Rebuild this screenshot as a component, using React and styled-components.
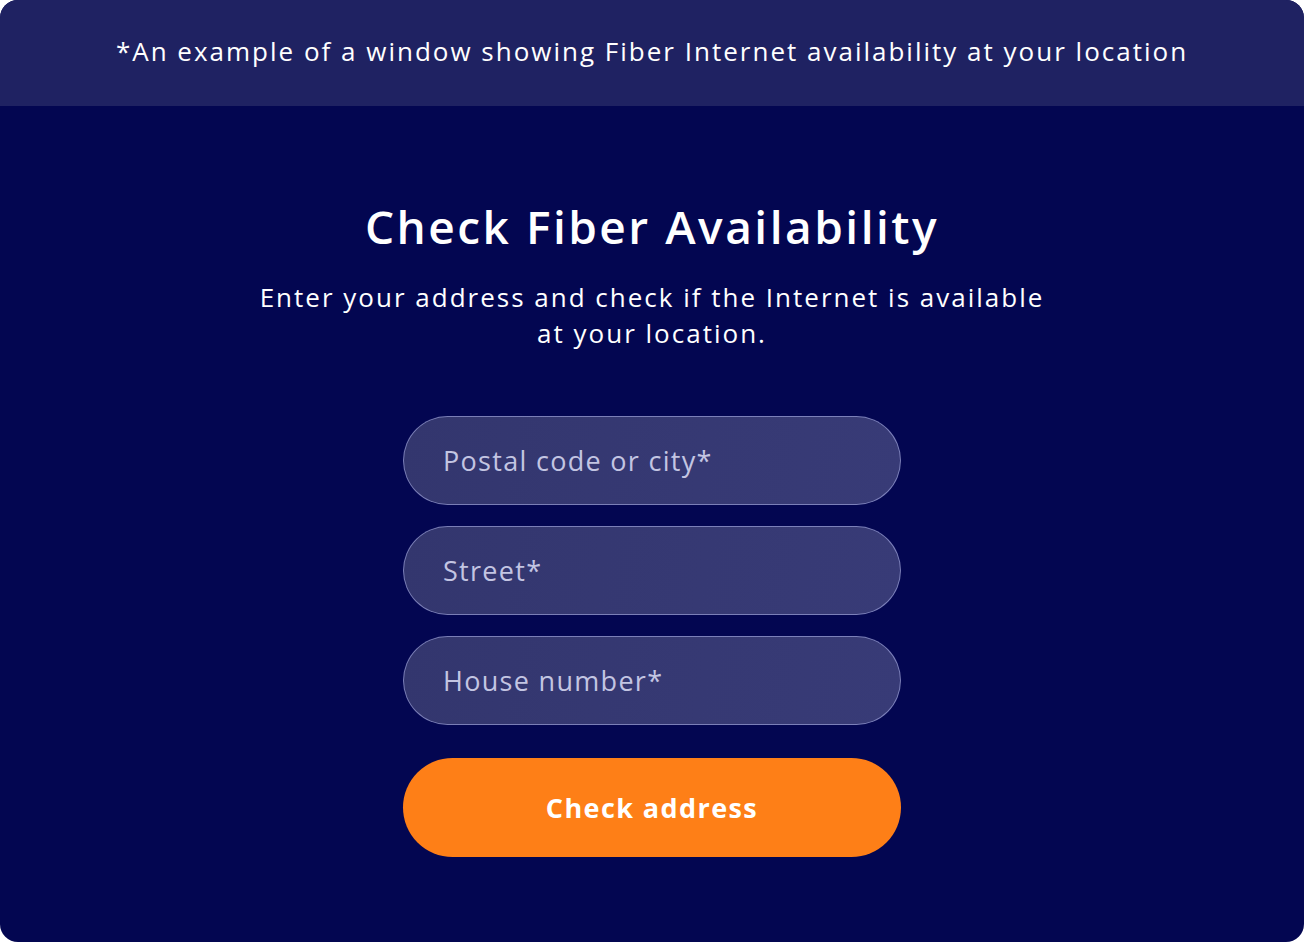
import React from 'react';
import styled, { createGlobalStyle } from 'styled-components';

const GlobalStyle = createGlobalStyle`
  html, body {
    margin: 0;
    padding: 0;
    background: #ffffff;
  }
  body {
    font-family: 'Open Sans', 'DejaVu Sans', sans-serif;
  }
`;

const Frame = styled.div`
  width: 1304px;
  height: 942px;
  border-radius: 18px;
  overflow: hidden;
  background: #030651;
  display: flex;
  flex-direction: column;
`;

const Banner = styled.div`
  height: 106px;
  flex-shrink: 0;
  background: #1f2262;
  display: flex;
  align-items: center;
  justify-content: center;
  color: #ffffff;
  font-size: 26px;
  font-weight: 500;
  letter-spacing: 2px;
  padding-bottom: 4px;
  box-sizing: border-box;
`;

const Body = styled.div`
  display: flex;
  flex-direction: column;
  align-items: center;
  padding-top: 92px;
`;

const Title = styled.h1`
  margin: 0;
  color: #ffffff;
  font-size: 46px;
  font-weight: 600;
  line-height: 56px;
  letter-spacing: 2.5px;
`;

const Subtitle = styled.p`
  margin: 25px 0 0;
  color: #ffffff;
  font-size: 26px;
  line-height: 36px;
  letter-spacing: 2px;
  text-align: center;
  width: 860px;
`;

const Form = styled.form`
  margin-top: 65px;
  display: flex;
  flex-direction: column;
  gap: 21px;
  width: 498px;
`;

const Field = styled.input`
  box-sizing: border-box;
  width: 100%;
  height: 89px;
  border-radius: 45px;
  border: 1px solid rgba(180, 186, 240, 0.55);
  background: linear-gradient(100deg, #33366e 0%, #383b77 100%);
  padding: 0 39px;
  font-family: inherit;
  font-size: 27px;
  letter-spacing: 1.3px;
  color: #ffffff;
  outline: none;

  &::placeholder {
    color: #c3c5e2;
  }
`;

const Submit = styled.button`
  margin-top: 12px;
  height: 99px;
  border: none;
  border-radius: 50px;
  background: #fe7f17;
  color: #ffffff;
  font-family: inherit;
  font-size: 27px;
  font-weight: 700;
  letter-spacing: 1.4px;
  cursor: pointer;
`;

const fields = ['Postal code or city*', 'Street*', 'House number*'];

const App = () => {
  return (
    <>
      <GlobalStyle />
      <Frame>
        <Banner>
          *An example of a window showing Fiber Internet availability at your location
        </Banner>
        <Body>
          <Title>Check Fiber Availability</Title>
          <Subtitle>
            Enter your address and check if the Internet is available
            <br />
            at your location.
          </Subtitle>
          <Form onSubmit={(e) => e.preventDefault()}>
            {fields.map((label) => (
              <Field key={label} type="text" placeholder={label} />
            ))}
            <Submit type="submit">Check address</Submit>
          </Form>
        </Body>
      </Frame>
    </>
  );
};

export default App;
